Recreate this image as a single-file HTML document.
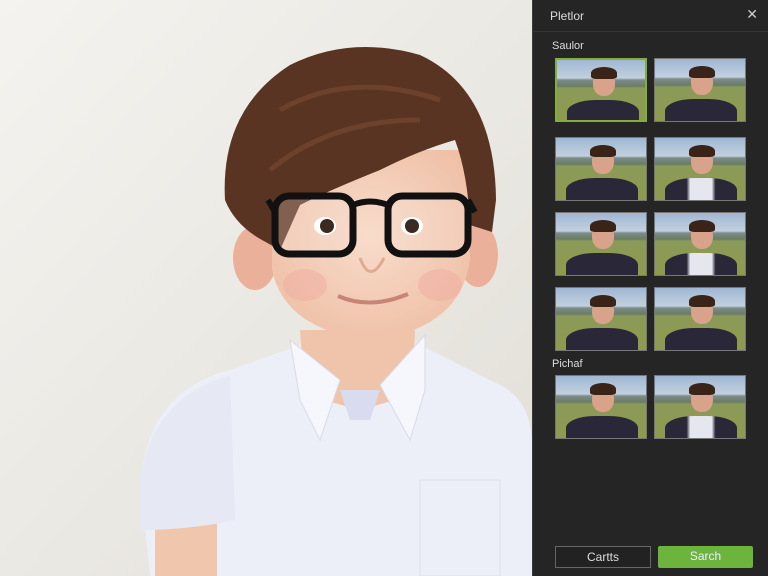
<!DOCTYPE html>
<html><head><meta charset="utf-8"><style>
*{margin:0;padding:0;box-sizing:border-box}
html,body{width:768px;height:576px;overflow:hidden}
body{background:#222;font-family:"Liberation Sans",sans-serif;position:relative}
#photo{position:absolute;left:0;top:0;width:532px;height:576px}
#panel{position:absolute;left:532px;top:0;width:236px;height:576px;background:#252525;border-left:1px solid #3a3a3a}
.hdr{height:32px;border-bottom:1px solid #333;color:#ddd;font-size:12px;padding:9px 0 0 17px;position:relative}
.x{position:absolute;right:10px;top:6px;font-size:14px;color:#ccc}
.lbl{position:absolute;left:19px;color:#ddd;font-size:11px}
.th{position:absolute;width:92px;height:64px;border:1px solid #777;overflow:hidden;
background:linear-gradient(#9fb7d4 0,#c2d0de 18px,#7d8c8a 20px,#6a7c66 26px,#8a9a58 28px,#8f9a4e 100%)}
.th.sel{border:2px solid #7fb03a}
.th .hd{position:absolute;left:36px;top:10px;width:22px;height:26px;border-radius:45%;background:#d8a38a}
.th .hr{position:absolute;left:34px;top:7px;width:26px;height:12px;border-radius:50% 50% 20% 20%;background:#3a2418}
.th .bd{position:absolute;left:10px;top:40px;width:72px;height:30px;border-radius:40% 40% 0 0;background:#2a2838}
.th.w .bd{background:linear-gradient(90deg,#2a2838 30%,#e6e6ee 35%,#e6e6ee 65%,#2a2838 70%)}
.btn{position:absolute;top:546px;height:22px;font-size:12px;text-align:center;line-height:21px}
</style></head><body>
<div id="photo"><svg width="532" height="576" viewBox="0 0 532 576">
<defs><linearGradient id="bg" x1="0" y1="0" x2="1" y2="1"><stop offset="0" stop-color="#f4f3ef"/><stop offset="1" stop-color="#e2dfd8"/></linearGradient>
<radialGradient id="sk" cx="0.5" cy="0.45" r="0.6"><stop offset="0" stop-color="#f8dccb"/><stop offset="1" stop-color="#efc0a6"/></radialGradient></defs>
<rect width="532" height="576" fill="url(#bg)"/>
<path d="M140 480 Q150 390 230 370 L300 345 L420 345 L500 385 Q530 400 532 440 L532 576 L150 576 Z" fill="#eceef8"/>
<rect x="155" y="520" width="62" height="56" fill="#f0c7ad"/>
<path d="M140 480 Q150 400 230 375 L235 520 Q190 530 140 530 Z" fill="#e6e8f4"/>
<path d="M300 330 L415 330 L412 395 L360 410 L305 395 Z" fill="#f0c4aa"/>
<path d="M290 340 L340 380 L320 440 L300 400 Z M425 335 L380 385 L410 440 L425 390 Z" fill="#f6f7fc" stroke="#d8dae8"/>
<path d="M340 390 L380 390 L370 420 L350 420 Z" fill="#d9dcef"/>
<rect x="420" y="480" width="80" height="96" fill="none" stroke="#dcdeea"/>
<ellipse cx="255" cy="258" rx="22" ry="32" fill="#eab09a"/>
<ellipse cx="478" cy="255" rx="20" ry="32" fill="#eab09a"/>
<path d="M272 150 L467 150 L470 260 Q460 330 370 340 Q285 330 272 270 Z" fill="url(#sk)"/>
<ellipse cx="305" cy="285" rx="22" ry="16" fill="#f0a8a0" opacity="0.45"/>
<ellipse cx="440" cy="285" rx="22" ry="16" fill="#f0a8a0" opacity="0.45"/>
<path d="M225 200 Q220 110 290 65 Q350 35 420 55 Q495 90 496 200 L492 232 L470 225 Q468 175 455 140 Q420 150 380 170 Q330 190 300 205 L280 250 L262 240 Q235 225 225 200 Z" fill="#5a3423"/>
<path d="M280 110 Q350 70 440 100 M270 170 Q330 120 420 120" stroke="#7a4c34" stroke-width="5" fill="none" opacity="0.6"/>
<rect x="275" y="196" width="78" height="58" rx="14" fill="#f6e4da" fill-opacity="0.25" stroke="#111" stroke-width="7"/>
<rect x="388" y="196" width="80" height="58" rx="14" fill="#f6e4da" fill-opacity="0.25" stroke="#111" stroke-width="7"/>
<path d="M353 205 Q370 198 388 205" stroke="#111" stroke-width="6" fill="none"/>
<path d="M268 200 L275 212 M468 200 L475 212" stroke="#111" stroke-width="6"/>
<ellipse cx="325" cy="226" rx="11" ry="9" fill="#fff"/><circle cx="327" cy="226" r="7" fill="#3a2a20"/>
<ellipse cx="412" cy="226" rx="11" ry="9" fill="#fff"/><circle cx="412" cy="226" r="7" fill="#3a2a20"/>
<path d="M360 258 Q370 285 384 258" stroke="#deaa92" stroke-width="3" fill="none"/>
<path d="M338 296 Q370 310 408 294" stroke="#c98478" stroke-width="4" fill="none"/>
</svg></div>
<div id="panel">
<div class="hdr">Pletlor<span class="x">✕</span></div>
<div class="lbl" style="top:40px">Saulor</div>
<div class="th sel" style="left:22px;top:58px"><div class="bd"></div><div class="hd"></div><div class="hr"></div></div>
<div class="th" style="left:121px;top:58px"><div class="bd"></div><div class="hd"></div><div class="hr"></div></div>
<div class="th" style="left:22px;top:137px"><div class="bd"></div><div class="hd"></div><div class="hr"></div></div>
<div class="th w" style="left:121px;top:137px"><div class="bd"></div><div class="hd"></div><div class="hr"></div></div>
<div class="th" style="left:22px;top:212px"><div class="bd"></div><div class="hd"></div><div class="hr"></div></div>
<div class="th w" style="left:121px;top:212px"><div class="bd"></div><div class="hd"></div><div class="hr"></div></div>
<div class="th" style="left:22px;top:287px"><div class="bd"></div><div class="hd"></div><div class="hr"></div></div>
<div class="th" style="left:121px;top:287px"><div class="bd"></div><div class="hd"></div><div class="hr"></div></div>
<div class="lbl" style="top:358px">Pichaf</div>
<div class="th" style="left:22px;top:375px"><div class="bd"></div><div class="hd"></div><div class="hr"></div></div>
<div class="th w" style="left:121px;top:375px"><div class="bd"></div><div class="hd"></div><div class="hr"></div></div>
<div class="btn" style="left:22px;width:96px;border:1px solid #666;color:#ddd;background:#222">Cartts</div>
<div class="btn" style="left:125px;width:95px;background:#6cb43c;color:#eef;border-radius:2px">Sarch</div>
</div>
</body></html>
